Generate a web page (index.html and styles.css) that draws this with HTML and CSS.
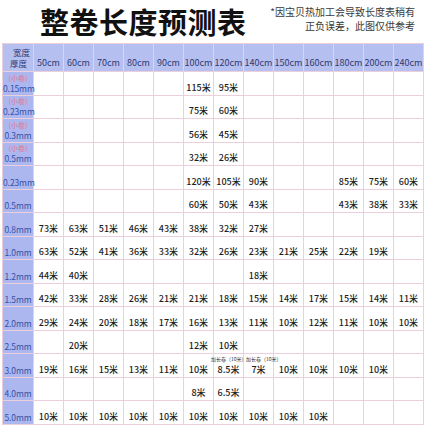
FILE: index.html
```html
<!DOCTYPE html>
<html lang="zh-CN">
<head>
<meta charset="utf-8">
<title>整卷长度预测表</title>
<link rel="stylesheet" href="styles.css">
</head>
<body>
<div class="page">
  <header class="top">
    <h1 class="title">整卷长度预测表</h1>
    <p class="note">*因宝贝热加工会导致长度表稍有<br>正负误差，此图仅供参考</p>
  </header>
  <table class="grid">
    <colgroup>
      <col class="c-label">
      <col><col><col><col><col><col><col><col><col><col><col><col><col>
    </colgroup>
    <thead>
      <tr class="head">
        <th class="corner"><span class="w">宽度</span><span class="t">厚度</span></th>
        <th>50cm</th><th>60cm</th><th>70cm</th><th>80cm</th><th>90cm</th><th>100cm</th><th>120cm</th><th>140cm</th><th>150cm</th><th>160cm</th><th>180cm</th><th>200cm</th><th>240cm</th>
      </tr>
    </thead>
    <tbody>
      <tr><th><span class="small">（小卷）</span><span>0.15mm</span></th><td></td><td></td><td></td><td></td><td></td><td>115米</td><td>95米</td><td></td><td></td><td></td><td></td><td></td><td></td></tr>
      <tr><th><span class="small">（小卷）</span><span>0.23mm</span></th><td></td><td></td><td></td><td></td><td></td><td>75米</td><td>60米</td><td></td><td></td><td></td><td></td><td></td><td></td></tr>
      <tr><th><span class="small">（小卷）</span><span>0.3mm</span></th><td></td><td></td><td></td><td></td><td></td><td>56米</td><td>45米</td><td></td><td></td><td></td><td></td><td></td><td></td></tr>
      <tr><th><span class="small">（小卷）</span><span>0.5mm</span></th><td></td><td></td><td></td><td></td><td></td><td>32米</td><td>26米</td><td></td><td></td><td></td><td></td><td></td><td></td></tr>
      <tr><th>0.23mm</th><td></td><td></td><td></td><td></td><td></td><td>120米</td><td>105米</td><td>90米</td><td></td><td></td><td>85米</td><td>75米</td><td>60米</td></tr>
      <tr><th>0.5mm</th><td></td><td></td><td></td><td></td><td></td><td>60米</td><td>50米</td><td>43米</td><td></td><td></td><td>43米</td><td>38米</td><td>33米</td></tr>
      <tr><th>0.8mm</th><td>73米</td><td>63米</td><td>51米</td><td>46米</td><td>43米</td><td>38米</td><td>32米</td><td>27米</td><td></td><td></td><td></td><td></td><td></td></tr>
      <tr><th>1.0mm</th><td>63米</td><td>52米</td><td>41米</td><td>36米</td><td>33米</td><td>32米</td><td>26米</td><td>23米</td><td>21米</td><td>25米</td><td>22米</td><td>19米</td><td></td></tr>
      <tr><th>1.2mm</th><td>44米</td><td>40米</td><td></td><td></td><td></td><td></td><td></td><td>18米</td><td></td><td></td><td></td><td></td><td></td></tr>
      <tr><th>1.5mm</th><td>42米</td><td>33米</td><td>28米</td><td>26米</td><td>21米</td><td>21米</td><td>18米</td><td>15米</td><td>14米</td><td>17米</td><td>15米</td><td>14米</td><td>11米</td></tr>
      <tr><th>2.0mm</th><td>29米</td><td>24米</td><td>20米</td><td>18米</td><td>17米</td><td>16米</td><td>13米</td><td>11米</td><td>10米</td><td>12米</td><td>11米</td><td>10米</td><td>10米</td></tr>
      <tr><th>2.5mm</th><td></td><td>20米</td><td></td><td></td><td></td><td>12米</td><td>10米</td><td></td><td></td><td></td><td></td><td></td><td></td></tr>
      <tr><th>3.0mm</th><td>19米</td><td>16米</td><td>15米</td><td>13米</td><td>11米</td><td>10米</td><td class="tagged"><span class="tag tag-a">加长卷（10米）</span>8.5米</td><td class="tagged"><span class="tag tag-b">加长卷（10米）</span>7米</td><td>10米</td><td>10米</td><td>10米</td><td>10米</td><td></td></tr>
      <tr><th>4.0mm</th><td></td><td></td><td></td><td></td><td></td><td>8米</td><td>6.5米</td><td></td><td></td><td></td><td></td><td></td><td></td></tr>
      <tr><th>5.0mm</th><td>10米</td><td>10米</td><td>10米</td><td>10米</td><td>10米</td><td>10米</td><td>10米</td><td>10米</td><td>10米</td><td>10米</td><td></td><td></td><td></td></tr>
    </tbody>
  </table>
</div>
</body>
</html>
```
FILE: styles.css
```css
* { box-sizing: border-box; }
html, body { margin: 0; padding: 0; background: #ffffff; }
body {
  width: 426px;
  height: 426px;
  overflow: hidden;
  font-family: "Noto Sans CJK SC", "Noto Sans", sans-serif;
}
.page { display: flex; flex-direction: column; }
.top {
  height: 43px;
  display: flex;
  align-items: flex-start;
  justify-content: space-between;
}
.title {
  margin: 0;
  padding: 0 0 0 40px;
  font-size: 29px;
  line-height: 42px;
  font-weight: 700;
  color: #111;
  letter-spacing: 0.5px;
}
.note {
  margin: 0;
  padding: 5px 11px 0 0;
  font-size: 10px;
  line-height: 14px;
  text-align: right;
  color: #3a3a3a;
}
.grid {
  margin-left: 2px;
  width: 422px;
  table-layout: fixed;
  border-collapse: collapse;
  border: 1px solid #d2a4bc;
}
.c-label { width: 31px; }
.grid th, .grid td {
  border: 1px solid #ebcfdb;
  padding: 0 0 2px 0;
  text-align: center;
  vertical-align: bottom;
  white-space: nowrap;
  overflow: visible;
}
.grid tbody tr { height: 23.5px; }
.grid .head { height: 28px; }
.head th {
  background: #b6c0f0;
  font-size: 9px;
  line-height: 11px;
  font-weight: 400;
  color: #2e3a72;
  padding-bottom: 3px;
}
.corner { position: relative; text-align: left; }
.corner .w { position: absolute; right: 3px; top: 3px; font-size: 8.5px; line-height: 10px; }
.corner .t { display: block; padding-left: 1px; font-size: 8.5px; line-height: 10px; }
tbody th {
  background: #abb7ee;
  font-size: 8.5px;
  line-height: 10px;
  font-weight: 400;
  color: #3750a8;
  letter-spacing: -0.1px;
}
tbody th span { display: block; }
tbody th .small {
  font-size: 7px;
  line-height: 9px;
  color: #e2778e;
}
tbody td {
  font-size: 9px;
  line-height: 11px;
  font-weight: 500;
  color: #1e1e1e;
  padding-bottom: 3px;
}
.tagged { position: relative; }
.tag {
  position: absolute;
  top: 2px;
  font-size: 5px;
  line-height: 6px;
  font-weight: 400;
  color: #333;
  white-space: nowrap;
}
.tag-a { left: -3px; }
.tag-b { left: 2px; }
```
